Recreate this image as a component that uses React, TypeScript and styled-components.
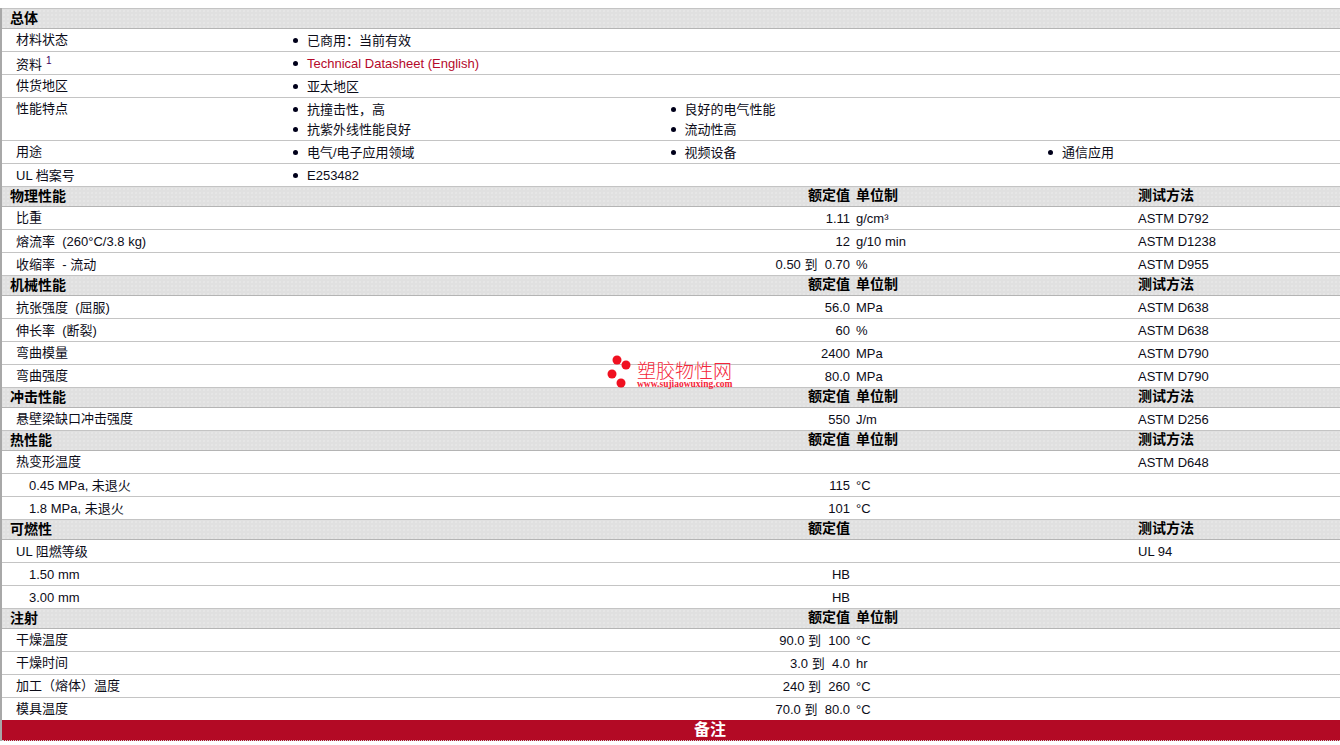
import React from 'react';
import styled, { createGlobalStyle } from 'styled-components';

const GlobalStyle = createGlobalStyle`
  html, body {
    margin: 0;
    padding: 0;
    background: #fff;
    overflow: hidden;
  }
  body {
    font-family: "Liberation Sans", "Noto Sans CJK SC", Arial, sans-serif;
    font-size: 13px;
    color: #0c0c18;
  }
`;

const Page = styled.div`
  position: relative;
  width: 1340px;
  height: 745px;
  padding-top: 8px;
  box-sizing: border-box;
  overflow: hidden;
`;

const Sheet = styled.div`
  border-left: 2px solid #a8a8a8;
`;

const SectionHeader = styled.div<{ $first?: boolean }>`
  display: grid;
  grid-template-columns: 288px 560px 288px 1fr;
  box-sizing: border-box;
  height: ${(p) => (p.$first ? 21 : 20)}px;
  line-height: 19px;
  font-size: 14px;
  font-weight: 700;
  color: #000;
  background-color: #e0e0e0;
  background-image: radial-gradient(#e6e6e6 0.7px, transparent 0.8px);
  background-size: 4px 4px;
  border-bottom: 1px solid #b4b4b4;
  border-top: ${(p) => (p.$first ? '1px solid #c4c4c4' : '0')};
`;

const SectionTitle = styled.div`
  padding-left: 8px;
`;

const HeaderCell = styled.div`
  margin-top: -1px;
`;

const HeaderValue = styled(HeaderCell)`
  text-align: right;
`;

const HeaderUnit = styled(HeaderCell)`
  padding-left: 6px;
`;

const Row = styled.div<{ $last?: boolean }>`
  display: grid;
  grid-template-columns: 288px 560px 288px 1fr;
  box-sizing: border-box;
  min-height: ${(p) => (p.$last ? 22 : 23)}px;
  line-height: 21px;
  border-bottom: ${(p) => (p.$last ? '0' : '1px solid #c4c4c4')};
`;

const InfoRow = styled(Row)`
  grid-template-columns: 288px 1fr;
`;

// labels holding latin text sit a pixel lower than plain chinese ones
const Label = styled.div<{ $indent?: boolean; $offset?: number }>`
  padding-left: ${(p) => (p.$indent ? 27 : 14)}px;
  padding-top: ${(p) => p.$offset ?? 0}px;
  margin-bottom: -${(p) => p.$offset ?? 0}px;
  white-space: pre;
`;

const Sup = styled.sup`
  font-size: 10px;
  line-height: 0;
  color: #400060;
  margin-left: 4px;
`;

const Value = styled.div`
  text-align: right;
  padding-top: 1px;
  white-space: pre;
`;

const Unit = styled.div`
  padding: 1px 0 0 6px;
`;

const Method = styled.div`
  padding-top: 1px;
`;

const InfoList = styled.ul`
  display: grid;
  grid-template-columns: repeat(3, 377.5px);
  margin: 0;
  padding: 1px 0;
  list-style: none;
`;

const InfoItem = styled.li`
  display: flex;
  align-items: center;
  height: 20px;
  white-space: nowrap;

  &::before {
    content: '';
    flex: none;
    width: 5px;
    height: 5px;
    margin: 1px 9px 0 3px;
    border-radius: 50%;
    background: #00001a;
  }
`;

const DataLink = styled.a`
  color: #b5092a;
  text-decoration: none;
`;

const Footer = styled.div`
  height: 20px;
  line-height: 20px;
  text-align: center;
  font-size: 16px;
  font-weight: 700;
  color: #fff;
  background: #b30a25;
  border-bottom: 1px dotted #d0d0d0;
`;

const FooterText = styled.span`
  margin-left: 78px;
`;

const Watermark = styled.div`
  position: absolute;
  left: 606px;
  top: 354px;
  display: flex;
  gap: 5px;
  color: #f4263a;
`;

const WatermarkText = styled.div`
  display: flex;
  flex-direction: column;
  padding-top: 11px;
`;

const WatermarkName = styled.div`
  font-size: 19px;
  line-height: 14px;
  font-weight: 300;
  white-space: nowrap;
`;

const WatermarkUrl = styled.div`
  font-family: "Liberation Serif", serif;
  font-size: 9.5px;
  font-weight: 700;
  line-height: 10px;
  white-space: nowrap;
`;

type DataItem = {
  label: string;
  indent?: boolean;
  value?: string;
  unit?: string;
  method?: string;
};

type Section = {
  title: string;
  value?: boolean;
  unit?: boolean;
  method?: boolean;
  rows: DataItem[];
};

const sections: Section[] = [
  {
    title: '物理性能',
    value: true,
    unit: true,
    method: true,
    rows: [
      { label: '比重', value: '1.11', unit: 'g/cm³', method: 'ASTM D792' },
      { label: '熔流率  (260°C/3.8 kg)', value: '12', unit: 'g/10 min', method: 'ASTM D1238' },
      { label: '收缩率  - 流动', value: '0.50 到  0.70', unit: '%', method: 'ASTM D955' },
    ],
  },
  {
    title: '机械性能',
    value: true,
    unit: true,
    method: true,
    rows: [
      { label: '抗张强度  (屈服)', value: '56.0', unit: 'MPa', method: 'ASTM D638' },
      { label: '伸长率  (断裂)', value: '60', unit: '%', method: 'ASTM D638' },
      { label: '弯曲模量', value: '2400', unit: 'MPa', method: 'ASTM D790' },
      { label: '弯曲强度', value: '80.0', unit: 'MPa', method: 'ASTM D790' },
    ],
  },
  {
    title: '冲击性能',
    value: true,
    unit: true,
    method: true,
    rows: [{ label: '悬壁梁缺口冲击强度', value: '550', unit: 'J/m', method: 'ASTM D256' }],
  },
  {
    title: '热性能',
    value: true,
    unit: true,
    method: true,
    rows: [
      { label: '热变形温度', method: 'ASTM D648' },
      { label: '0.45 MPa, 未退火', indent: true, value: '115', unit: '°C' },
      { label: '1.8 MPa, 未退火', indent: true, value: '101', unit: '°C' },
    ],
  },
  {
    title: '可燃性',
    value: true,
    method: true,
    rows: [
      { label: 'UL 阻燃等级', method: 'UL 94' },
      { label: '1.50 mm', indent: true, value: 'HB' },
      { label: '3.00 mm', indent: true, value: 'HB' },
    ],
  },
  {
    title: '注射',
    value: true,
    unit: true,
    rows: [
      { label: '干燥温度', value: '90.0 到  100', unit: '°C' },
      { label: '干燥时间', value: '3.0 到  4.0', unit: 'hr' },
      { label: '加工（熔体）温度', value: '240 到  260', unit: '°C' },
      { label: '模具温度', value: '70.0 到  80.0', unit: '°C' },
    ],
  },
];

const labelOffset = (label: string) => (/[\x20-\x7e]/.test(label) ? 1 : 0);

const App: React.FC = () => {
  return (
    <Page>
      <GlobalStyle />
      <Sheet>
        <SectionHeader $first>
          <SectionTitle>总体</SectionTitle>
        </SectionHeader>
        <InfoRow>
          <Label>材料状态</Label>
          <InfoList>
            <InfoItem>已商用：当前有效</InfoItem>
          </InfoList>
        </InfoRow>
        <InfoRow>
          <Label $offset={2}>
            资料<Sup>1</Sup>
          </Label>
          <InfoList>
            <InfoItem>
              <DataLink href="#">Technical Datasheet (English)</DataLink>
            </InfoItem>
          </InfoList>
        </InfoRow>
        <InfoRow>
          <Label>供货地区</Label>
          <InfoList>
            <InfoItem>亚太地区</InfoItem>
          </InfoList>
        </InfoRow>
        <InfoRow>
          <Label>性能特点</Label>
          <InfoList>
            <InfoItem>抗撞击性，高</InfoItem>
            <InfoItem>良好的电气性能</InfoItem>
            <li />
            <InfoItem>抗紫外线性能良好</InfoItem>
            <InfoItem>流动性高</InfoItem>
          </InfoList>
        </InfoRow>
        <InfoRow>
          <Label>用途</Label>
          <InfoList>
            <InfoItem>电气/电子应用领域</InfoItem>
            <InfoItem>视频设备</InfoItem>
            <InfoItem>通信应用</InfoItem>
          </InfoList>
        </InfoRow>
        <InfoRow>
          <Label $offset={1}>UL 档案号</Label>
          <InfoList>
            <InfoItem>E253482</InfoItem>
          </InfoList>
        </InfoRow>

        {sections.map((section, s) => (
          <React.Fragment key={section.title}>
            <SectionHeader>
              <SectionTitle>{section.title}</SectionTitle>
              <HeaderValue>{section.value && '额定值'}</HeaderValue>
              <HeaderUnit>{section.unit && '单位制'}</HeaderUnit>
              <HeaderCell>{section.method && '测试方法'}</HeaderCell>
            </SectionHeader>
            {section.rows.map((row, r) => (
              <Row key={row.label} $last={s === sections.length - 1 && r === section.rows.length - 1}>
                <Label $indent={row.indent} $offset={labelOffset(row.label)}>
                  {row.label}
                </Label>
                <Value>{row.value}</Value>
                <Unit>{row.unit}</Unit>
                <Method>{row.method}</Method>
              </Row>
            ))}
          </React.Fragment>
        ))}

        <Footer>
          <FooterText>备注</FooterText>
        </Footer>
      </Sheet>

      <Watermark>
        <svg width="26" height="34" viewBox="0 0 26 34" aria-hidden="true">
          <circle cx="11" cy="6" r="4.5" fill="#f01020" />
          <circle cx="20" cy="11" r="4.5" fill="#f01020" />
          <circle cx="6" cy="20" r="4.5" fill="#f01020" />
          <circle cx="15" cy="29" r="4.5" fill="#f01020" />
        </svg>
        <WatermarkText>
          <WatermarkName>塑胶物性网</WatermarkName>
          <WatermarkUrl>www.sujiaowuxing.com</WatermarkUrl>
        </WatermarkText>
      </Watermark>
    </Page>
  );
};

export default App;
